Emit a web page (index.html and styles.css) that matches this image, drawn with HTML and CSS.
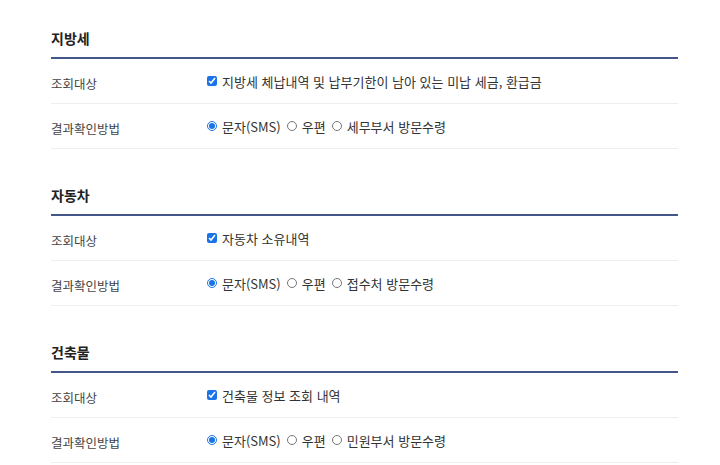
FILE: index.html
```html
<!DOCTYPE html>
<html lang="ko">
<head>
    <meta charset="UTF-8">
    <title>조회 설정</title>
    <link rel="stylesheet" href="styles.css">
</head>
<body>
    <div class="wrap">
        <div class="section">
            <h3 class="title">지방세</h3>
            <div class="row">
                <span class="label">조회대상</span>
                <div class="value">
                    <label class="opt"><input type="checkbox" checked>지방세 체납내역 및 납부기한이 남아 있는 미납 세금, 환급금</label>
                </div>
            </div>
            <div class="row">
                <span class="label">결과확인방법</span>
                <div class="value">
                    <label class="opt"><input type="radio" name="r1" checked>문자(SMS)</label>
                    <label class="opt"><input type="radio" name="r1">우편</label>
                    <label class="opt"><input type="radio" name="r1">세무부서 방문수령</label>
                </div>
            </div>
        </div>
        <div class="section">
            <h3 class="title">자동차</h3>
            <div class="row">
                <span class="label">조회대상</span>
                <div class="value">
                    <label class="opt"><input type="checkbox" checked>자동차 소유내역</label>
                </div>
            </div>
            <div class="row">
                <span class="label">결과확인방법</span>
                <div class="value">
                    <label class="opt"><input type="radio" name="r2" checked>문자(SMS)</label>
                    <label class="opt"><input type="radio" name="r2">우편</label>
                    <label class="opt"><input type="radio" name="r2">접수처 방문수령</label>
                </div>
            </div>
        </div>
        <div class="section">
            <h3 class="title">건축물</h3>
            <div class="row">
                <span class="label">조회대상</span>
                <div class="value">
                    <label class="opt"><input type="checkbox" checked>건축물 정보 조회 내역</label>
                </div>
            </div>
            <div class="row">
                <span class="label">결과확인방법</span>
                <div class="value">
                    <label class="opt"><input type="radio" name="r3" checked>문자(SMS)</label>
                    <label class="opt"><input type="radio" name="r3">우편</label>
                    <label class="opt"><input type="radio" name="r3">민원부서 방문수령</label>
                </div>
            </div>
        </div>
    </div>
</body>
</html>
```
FILE: styles.css
```css
body {
    margin: 0;
    background: #fff;
    font-family: "Noto Sans CJK KR", "Noto Sans", sans-serif;
    color: #333;
}
.wrap {
    width: 627px;
    padding: 28px 0 0 51px;
}
.section {
    margin-bottom: 36px;
}
.title {
    margin: 0;
    padding-bottom: 9px;
    font-size: 14px;
    line-height: 20px;
    font-weight: bold;
    color: #222;
    border-bottom: 2px solid #43578a;
}
.row {
    display: flex;
    align-items: center;
    height: 44px;
    border-bottom: 1px solid #eee;
}
.label {
    width: 156px;
    padding-top: 4px;
    font-size: 12.5px;
    color: #444;
}
.value {
    display: flex;
    align-items: center;
    gap: 6px;
    font-size: 13px;
    color: #333;
}
.opt {
    display: flex;
    align-items: center;
}
.opt input {
    width: 10px;
    height: 10px;
    margin: 0 5px 0 0;
    accent-color: #1a73e8;
}
```
